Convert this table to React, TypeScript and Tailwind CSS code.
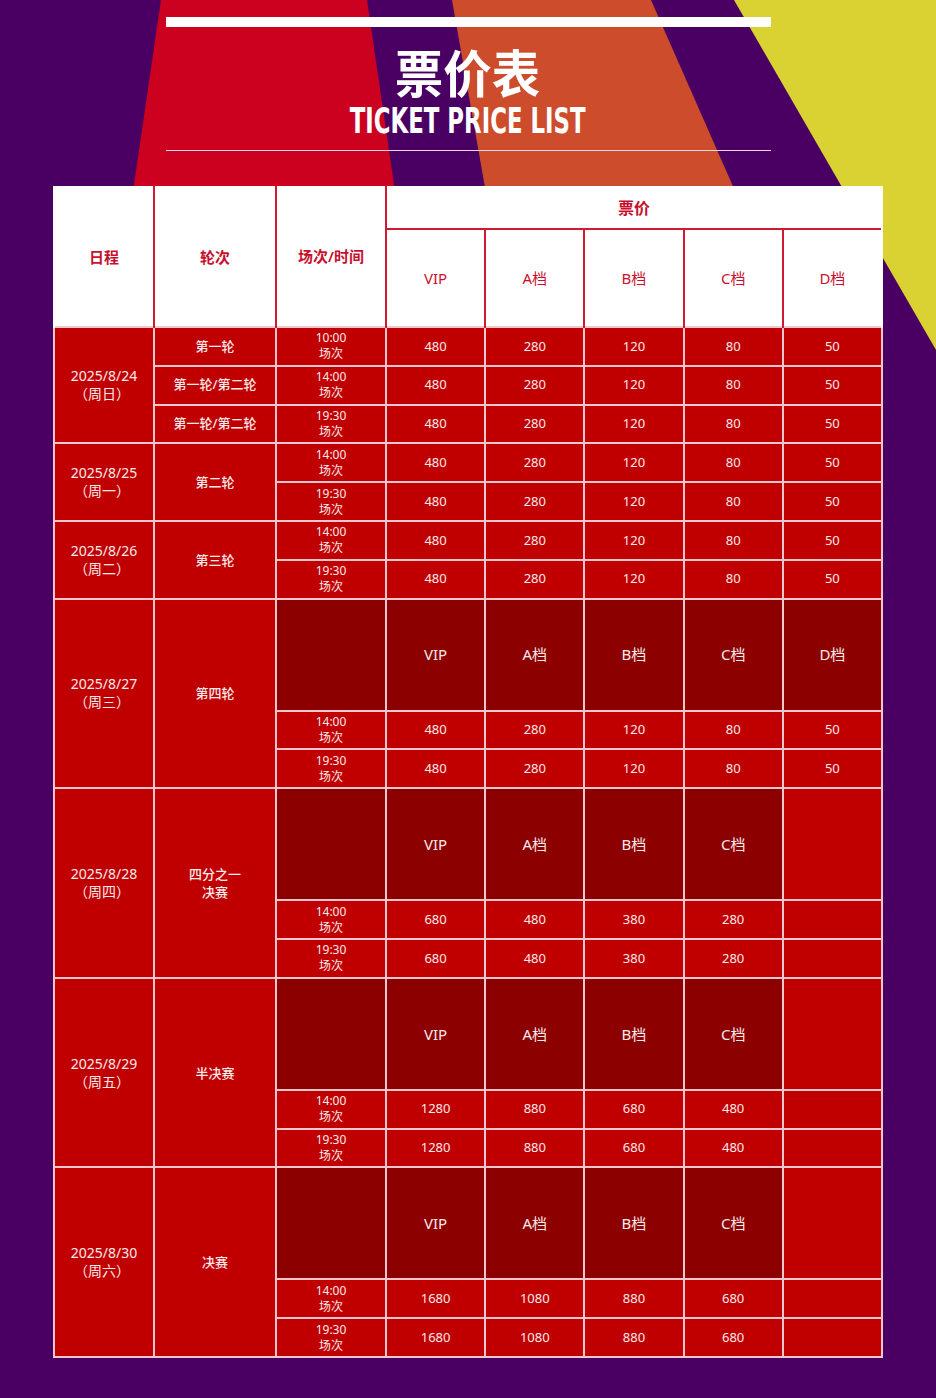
import React from "react";

type Row = { round?: string; time: string; prices: string[] };
type Section = {
  date: string;
  day: string;
  round?: string;
  tiers?: string[];
  rows: Row[];
};

const TIERS5 = ["VIP", "A档", "B档", "C档", "D档"];
const TIERS4 = ["VIP", "A档", "B档", "C档", ""];

const base = ["480", "280", "120", "80", "50"];

const sections: Section[] = [
  {
    date: "2025/8/24",
    day: "（周日）",
    rows: [
      { round: "第一轮", time: "10:00", prices: base },
      { round: "第一轮/第二轮", time: "14:00", prices: base },
      { round: "第一轮/第二轮", time: "19:30", prices: base },
    ],
  },
  {
    date: "2025/8/25",
    day: "（周一）",
    round: "第二轮",
    rows: [
      { time: "14:00", prices: base },
      { time: "19:30", prices: base },
    ],
  },
  {
    date: "2025/8/26",
    day: "（周二）",
    round: "第三轮",
    rows: [
      { time: "14:00", prices: base },
      { time: "19:30", prices: base },
    ],
  },
  {
    date: "2025/8/27",
    day: "（周三）",
    round: "第四轮",
    tiers: TIERS5,
    rows: [
      { time: "14:00", prices: base },
      { time: "19:30", prices: base },
    ],
  },
  {
    date: "2025/8/28",
    day: "（周四）",
    round: "四分之一\n决赛",
    tiers: TIERS4,
    rows: [
      { time: "14:00", prices: ["680", "480", "380", "280", ""] },
      { time: "19:30", prices: ["680", "480", "380", "280", ""] },
    ],
  },
  {
    date: "2025/8/29",
    day: "（周五）",
    round: "半决赛",
    tiers: TIERS4,
    rows: [
      { time: "14:00", prices: ["1280", "880", "680", "480", ""] },
      { time: "19:30", prices: ["1280", "880", "680", "480", ""] },
    ],
  },
  {
    date: "2025/8/30",
    day: "（周六）",
    round: "决赛",
    tiers: TIERS4,
    rows: [
      { time: "14:00", prices: ["1680", "1080", "880", "680", ""] },
      { time: "19:30", prices: ["1680", "1080", "880", "680", ""] },
    ],
  },
];

const td = "border-2 border-[#f2c6cd] text-center align-middle p-0";
const th = "border-2 border-b-0 border-[#d01a34] bg-white text-center align-middle p-0 text-[#c8102e]";

function Backdrop() {
  return (
    <svg
      className="absolute inset-0"
      width="936"
      height="1398"
      viewBox="0 0 936 1398"
      preserveAspectRatio="none"
    >
      <rect width="936" height="1398" fill="#4a0062" />
      <polygon points="161,0 367,0 440,500 88,500" fill="#cc001f" />
      <polygon points="452,0 651,0 871,500 540,500" fill="#cd4c2b" />
      <polygon points="734,0 936,0 936,350" fill="#dad232" />
    </svg>
  );
}

function Section({ s }: { s: Section }) {
  const span = s.rows.length + (s.tiers ? 1 : 0);
  const out: React.ReactNode[] = [];

  const dateCell = (
    <td rowSpan={span} className={`${td} bg-[#c00000] text-[14px] leading-[18px]`}>
      {s.date}
      <br />
      <span className="-ml-1">{s.day}</span>
    </td>
  );
  const roundCell = s.round ? (
    <td rowSpan={span} className={`${td} bg-[#c00000] text-[13px] font-medium leading-[18px] whitespace-pre-line`}>
      {s.round}
    </td>
  ) : null;

  if (s.tiers) {
    out.push(
      <tr key="tiers" className="h-[112px]">
        {dateCell}
        {roundCell}
        <td className={`${td} bg-[#8c0000]`} />
        {s.tiers.map((t, i) =>
          t ? (
            <td key={i} className={`${td} bg-[#8c0000] text-[15px]`}>
              {t}
            </td>
          ) : (
            <td key={i} className={`${td} bg-[#c00000]`} />
          )
        )}
      </tr>
    );
  }

  s.rows.forEach((r, idx) => {
    const first = idx === 0 && !s.tiers;
    out.push(
      <tr key={idx} className="h-[38.8px]">
        {first && dateCell}
        {first && roundCell}
        {r.round && (
          <td className={`${td} bg-[#c00000] text-[13px] font-medium`}>{r.round}</td>
        )}
        <td className={`${td} bg-[#c00000] text-[12px] leading-[16px]`}>
          {r.time}
          <br />
          场次
        </td>
        {r.prices.map((p, i) => (
          <td key={i} className={`${td} bg-[#c00000] text-[13px]`}>
            {p}
          </td>
        ))}
      </tr>
    );
  });

  return <>{out}</>;
}

export default function App() {
  return (
    <div
      className="relative w-[936px] h-[1398px] overflow-hidden bg-[#4a0062]"
      style={{ fontFamily: '"Noto Sans", "Noto Sans CJK SC", sans-serif' }}
    >
      <Backdrop />
      <div className="relative z-10 flex flex-col items-center pt-[17px]">
        <div className="w-[605px] h-[10px] bg-white" />
        <h1
          className="mt-[18px] h-[52px] text-white text-[51px] leading-[52px] font-bold scale-x-[0.95]"
          style={{ fontFamily: '"Noto Sans CJK SC", sans-serif' }}
        >
          票价表
        </h1>
        <div
          className="mt-[6px] h-[36px] text-white text-[35px] leading-[36px] font-bold scale-x-[0.725]"
          style={{ fontFamily: '"DejaVu Sans Condensed", "DejaVu Sans", sans-serif' }}
        >
          TICKET PRICE LIST
        </div>
        <div className="mt-[11px] w-[605px] h-[1px] bg-[#f0d6e6]" />

        <table className="mt-[35px] w-[830px] table-fixed border-collapse text-[#fbeaea]">
          <colgroup>
            <col className="w-[100px]" />
            <col className="w-[122px]" />
            <col className="w-[110px]" />
            <col />
            <col />
            <col />
            <col />
            <col />
          </colgroup>
          <thead>
            <tr className="h-[42px]">
              <th rowSpan={2} className={`${th} border-t-white border-l-white text-[15px] font-semibold`}>日程</th>
              <th rowSpan={2} className={`${th} border-t-white text-[15px] font-semibold`}>轮次</th>
              <th rowSpan={2} className={`${th} border-t-white text-[15px] font-semibold`}>
                <div className="-mt-[2px]">场次/时间</div>
              </th>
              <th colSpan={5} className={`${th} border-t-white border-r-white text-[16px] font-semibold`}>票价</th>
            </tr>
            <tr className="h-[98px]">
              {TIERS5.map((t) => (
                <th
                  key={t}
                  className={`${th} ${t === "D档" ? "border-r-white" : ""} text-[15px] font-normal`}
                >
                  {t}
                </th>
              ))}
            </tr>
          </thead>
          <tbody>
            {sections.map((s) => (
              <Section key={s.date} s={s} />
            ))}
          </tbody>
        </table>
      </div>
    </div>
  );
}
